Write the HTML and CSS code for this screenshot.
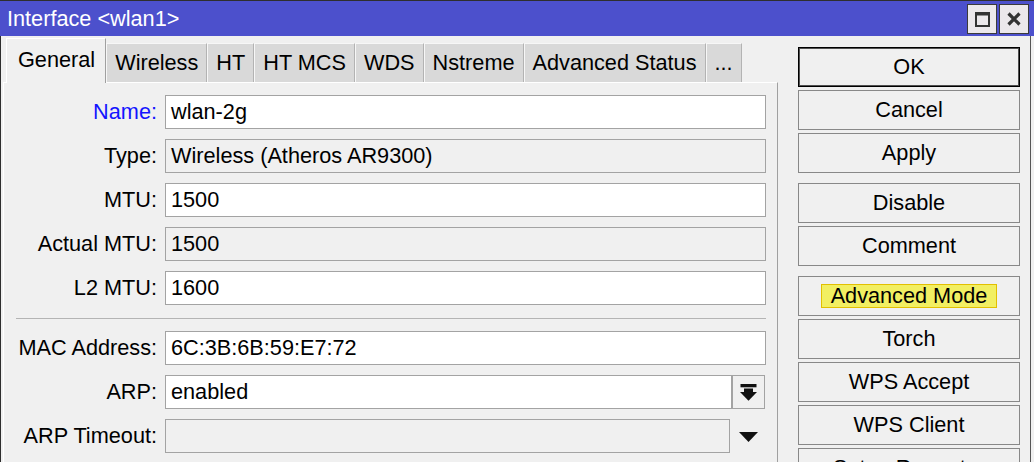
FILE: index.html
```html
<!DOCTYPE html>
<html>
<head>
<meta charset="utf-8">
<link rel="stylesheet" href="styles.css">
</head>
<body>
<div class="titlebar">
  <span class="title">Interface &lt;wlan1&gt;</span>
  <div class="tb-btns">
    <div class="tb-btn"><svg width="15" height="15" viewBox="0 0 15 15"><rect x="1" y="1.5" width="13" height="12.5" fill="none" stroke="#333" stroke-width="2"/><rect x="0" y="0" width="15" height="3.5" fill="#333"/></svg></div>
    <div class="tb-btn"><svg width="14" height="14" viewBox="0 0 14 14"><path d="M1.5 1.5 L12.5 12.5 M12.5 1.5 L1.5 12.5" stroke="#333" stroke-width="3.2"/></svg></div>
  </div>
</div>
<div class="body">
  <div class="left">
    <div class="tabs">
      <div class="tab active">General</div>
      <div class="tab">Wireless</div>
      <div class="tab">HT</div>
      <div class="tab">HT MCS</div>
      <div class="tab">WDS</div>
      <div class="tab">Nstreme</div>
      <div class="tab">Advanced Status</div>
      <div class="tab">...</div>
    </div>
    <div class="panel">
      <div class="group">
        <div class="row"><div class="label blue">Name:</div><div class="field">wlan-2g</div></div>
        <div class="row"><div class="label">Type:</div><div class="field ro">Wireless (Atheros AR9300)</div></div>
        <div class="row"><div class="label">MTU:</div><div class="field">1500</div></div>
        <div class="row"><div class="label">Actual MTU:</div><div class="field ro">1500</div></div>
        <div class="row"><div class="label">L2 MTU:</div><div class="field">1600</div></div>
      </div>
      <div class="sep"></div>
      <div class="group">
        <div class="row"><div class="label">MAC Address:</div><div class="field">6C:3B:6B:59:E7:72</div></div>
        <div class="row"><div class="label">ARP:</div>
          <div class="combo"><div class="field">enabled</div>
            <div class="dd-btn"><svg width="17" height="17" viewBox="0 0 17 17"><rect x="0.5" y="0" width="16" height="3.3" fill="#111"/><rect x="4" y="4.5" width="9" height="4" fill="#111"/><polygon points="0,8 17,8 8.5,16.8" fill="#111"/></svg></div>
          </div>
        </div>
        <div class="row"><div class="label">ARP Timeout:</div>
          <div class="combo"><div class="field ro"></div>
            <div class="dd-arrow"><svg width="19" height="10" viewBox="0 0 19 10"><polygon points="0,0 19,0 9.5,10" fill="#111"/></svg></div>
          </div>
        </div>
      </div>
    </div>
  </div>
  <div class="right">
    <div class="btn default">OK</div>
    <div class="btn">Cancel</div>
    <div class="btn">Apply</div>
    <div class="btn gap">Disable</div>
    <div class="btn">Comment</div>
    <div class="btn gap"><span class="hl">Advanced Mode</span></div>
    <div class="btn">Torch</div>
    <div class="btn">WPS Accept</div>
    <div class="btn">WPS Client</div>
    <div class="btn">Setup Repeater</div>
  </div>
</div>
</body>
</html>
```
FILE: styles.css
```css
* { box-sizing: border-box; }
html, body { margin: 0; }
body {
  background: #f0f0f0;
  font-family: "Liberation Sans", Arial, sans-serif;
  font-size: 21.7px;
  color: #000;
  width: 1034px;
  height: 462px;
  overflow: hidden;
}
.titlebar {
  height: 36px;
  border-top: 1px solid #2e2e2e;
  background: #4c50cc;
  display: flex;
  justify-content: space-between;
  align-items: flex-start;
}
.title {
  color: #fff;
  line-height: 30px;
  padding: 3px 0 0 7px;
  white-space: nowrap;
}
.tb-btns { display: flex; gap: 2px; padding: 3px 5px 0 0; }
.tb-btn {
  width: 30px;
  height: 30px;
  background: #ebe8eb;
  border: 1px solid #3a3a3a;
  display: flex;
  align-items: center;
  justify-content: center;
}
.body {
  display: flex;
  width: 1031px;
  height: 426px;
  border-left: 1px solid #2e2e2e;
  border-right: 1px solid #555;
  overflow: hidden;
}
.left {
  width: 777px;
  flex: none;
  padding-left: 2px;
  display: flex;
  flex-direction: column;
}
.tabs {
  display: flex;
  align-items: flex-end;
  height: 46px;
  flex: none;
  padding-left: 3px;
}
.tab {
  height: 39px;
  line-height: 37px;
  padding: 0 8px;
  background: #d9d9d9;
  border-top: 1px solid #f7f7f7;
  border-left: 1px solid #f7f7f7;
  border-right: 1px solid #b3b3b3;
  white-space: nowrap;
}
.tab.active {
  height: 45px;
  line-height: 41px;
  margin-bottom: -1px;
  background: #f0f0f0;
  border-top: 1px solid #fff;
  border-left: 1px solid #fff;
  border-right: 1px solid #a0a0a0;
  padding: 0 10px 0 11px;
  position: relative;
  z-index: 1;
}
.panel {
  flex: 1;
  background: #f0f0f0;
  border-top: 1px solid #fff;
  border-left: 1px solid #fff;
  border-right: 1px solid #a0a0a0;
  padding: 12px 11px 0 0;
}
.group { display: flex; flex-direction: column; gap: 10px; }
.row {
  display: grid;
  grid-template-columns: 153px 1fr;
  column-gap: 8px;
  align-items: center;
}
.label { text-align: right; white-space: nowrap; }
.label.blue { color: #1414ff; }
.field {
  height: 34px;
  border: 1px solid #a3a3a3;
  background: #fff;
  line-height: 32px;
  padding-left: 5px;
  white-space: nowrap;
  overflow: hidden;
}
.field.ro { background: #f0f0f0; }
.sep { height: 1px; background: #b4b4b4; margin: 13px 0 12px 12px; }
.combo { display: flex; }
.combo .field { flex: 1; }
.dd-btn {
  width: 33px;
  height: 34px;
  flex: none;
  margin-right: 1px;
  border: 1px solid #a3a3a3;
  background: #f0f0f0;
  display: flex;
  align-items: center;
  justify-content: center;
}
.dd-arrow {
  width: 36px;
  flex: none;
  display: flex;
  align-items: center;
  justify-content: center;
  padding-top: 2px;
}
.right {
  margin-left: 20px;
  width: 222px;
  flex: none;
  padding-top: 11px;
  display: flex;
  flex-direction: column;
  gap: 3px;
}
.btn {
  height: 40px;
  flex: none;
  border: 1px solid #888;
  background: #f0f0f0;
  display: flex;
  align-items: center;
  justify-content: center;
  white-space: nowrap;
}
.btn.default { border-color: #000; box-shadow: inset 0 0 0 1px #505050; }
.btn.gap { margin-top: 7px; }
.hl {
  background: #f2ef62;
  border: 1px solid #e2c000;
  padding: 0 9px;
  line-height: 22px;
}
```
